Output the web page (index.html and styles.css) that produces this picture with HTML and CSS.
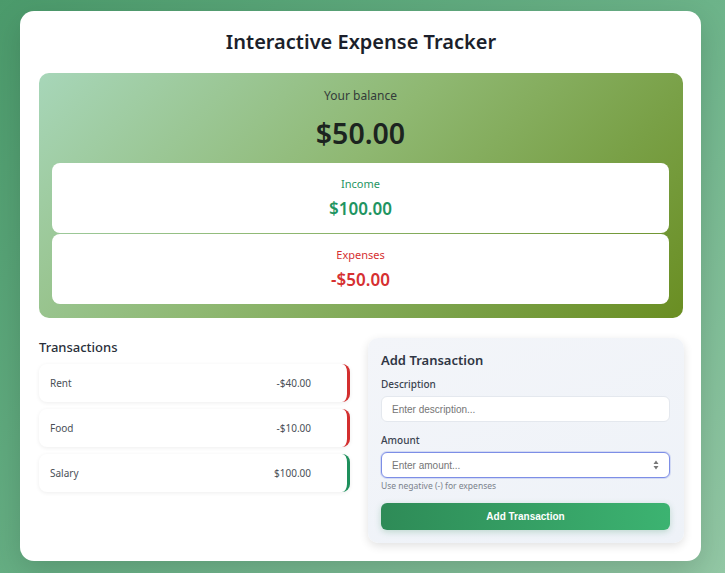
FILE: index.html
```html
<!DOCTYPE html>
<html lang="en">
<head>
<meta charset="utf-8">
<title>Interactive Expense Tracker</title>
<link rel="stylesheet" href="styles.css">
</head>
<body>
<div class="container">
  <h1 class="title">Interactive Expense Tracker</h1>
  <section class="balance-card">
    <div class="balance-label">Your balance</div>
    <div class="balance-value">$50.00</div>
    <div class="summary">
      <div class="summary-label income">Income</div>
      <div class="summary-value income">$100.00</div>
    </div>
    <div class="summary">
      <div class="summary-label expense">Expenses</div>
      <div class="summary-value expense">-$50.00</div>
    </div>
  </section>
  <div class="columns">
    <section class="transactions">
      <h2 class="section-title">Transactions</h2>
      <ul class="list">
        <li class="item minus"><span>Rent</span><span>-$40.00</span></li>
        <li class="item minus"><span>Food</span><span>-$10.00</span></li>
        <li class="item plus"><span>Salary</span><span>$100.00</span></li>
      </ul>
    </section>
    <section class="form-card">
      <h2 class="form-title">Add Transaction</h2>
      <label class="label">Description</label>
      <input class="input" type="text" placeholder="Enter description...">
      <label class="label label-gap">Amount</label>
      <div class="input input-focus">
        <span class="ph">Enter amount...</span>
        <svg class="spin" width="6" height="10" viewBox="0 0 6 10"><path d="M3 0.5L5.5 4H0.5Z M3 9.5L0.5 6H5.5Z" fill="#777"/></svg>
      </div>
      <div class="hint">Use negative (-) for expenses</div>
      <button class="btn">Add Transaction</button>
    </section>
  </div>
</div>
</body>
</html>
```

FILE: styles.css
```css
* { box-sizing: border-box; }
html, body { height: 100%; }
body {
  margin: 0;
  padding: 11px 24px 12px 20px;
  font-family: "Noto Sans", "Open Sans", sans-serif;
  background: linear-gradient(135deg, #4b9a6b 0%, #6cb389 55%, #93c8a5 100%);
  color: #2d3440;
}
.container {
  width: 681px;
  height: 550px;
  background: #fff;
  border-radius: 14px;
  padding: 17px 18px 0 19px;
  box-shadow: 0 10px 30px rgba(0,0,0,0.15);
}
.title {
  margin: 0 0 17px;
  text-align: center;
  font-size: 20px;
  font-weight: 600;
  color: #1b1f2b;
  line-height: 28px;
}
.balance-card {
  background: linear-gradient(135deg, #a7d6b9 0%, #8fb872 45%, #79a046 75%, #6a8e22 100%);
  border-radius: 10px;
  padding: 14px 14px 13px 13px;
  text-align: center;
}
.balance-label {
  font-size: 12px;
  color: #333c3a;
  line-height: 18px;
}
.balance-value {
  font-size: 28.5px;
  font-weight: 600;
  color: #1c2420;
  line-height: 36px;
  margin: 10px 0 12px;
}
.summary {
  background: #fff;
  border-radius: 8px;
  height: 70px;
  padding-top: 13px;
  margin-bottom: 1px;
}
.summary-label { font-size: 11px; line-height: 16px; }
.summary-value { font-size: 17px; font-weight: 600; line-height: 24px; margin-top: 5px; }
.income { color: #1f9562; }
.expense { color: #d63031; }
.columns {
  display: grid;
  grid-template-columns: 311px 316px;
  column-gap: 18px;
  margin-top: 20px;
}
.section-title {
  margin: 0;
  font-size: 13px;
  font-weight: 500;
  color: #2a2f3a;
  line-height: 16px;
  padding-top: 1px;
}
.list { list-style: none; margin: 9px 0 0; padding: 0; display: flex; flex-direction: column; gap: 7px; }
.item {
  height: 38px;
  display: flex;
  justify-content: space-between;
  align-items: center;
  padding: 0 36px 0 11px;
  background: #fff;
  border-radius: 8px;
  font-size: 10px;
  color: #4a4f57;
  box-shadow: 0 1px 4px rgba(0,0,0,0.07);
}
.item.minus { border-right: 3px solid #d32f2f; }
.item.plus { border-right: 3px solid #1e8f5c; }
.form-card {
  background: linear-gradient(160deg, #f3f5f9, #eef2f8);
  border-radius: 10px;
  padding: 14px 14px 14px 13px;
  height: 205px;
  box-shadow: 0 3px 10px rgba(0,0,0,0.12);
}
.form-title {
  margin: 0 0 9px;
  font-size: 13px;
  font-weight: 600;
  color: #2f3644;
  line-height: 16px;
}
.label {
  display: block;
  font-size: 10px;
  font-weight: 500;
  color: #3b4350;
  line-height: 14px;
  margin-bottom: 5px;
}
.label-gap { margin-top: 11px; }
.input {
  display: flex;
  align-items: center;
  width: 100%;
  height: 26px;
  border: 1px solid #e4e8ee;
  border-radius: 6px;
  background: #fff;
  padding: 0 10px;
  font-family: "Liberation Sans", Arial, sans-serif;
  font-size: 10px;
  color: #333;
  outline: none;
}
.input::placeholder { color: #757575; }
.input-focus { border-color: #7d8ee6; box-shadow: 0 0 0 1px rgba(125,142,230,0.25); justify-content: space-between; }
.ph { color: #757575; }
.hint {
  font-size: 8.5px;
  color: #7a818b;
  margin-top: 1px;
  line-height: 13px;
}
.btn {
  display: block;
  width: 100%;
  height: 27px;
  margin-top: 11px;
  border: none;
  border-radius: 6px;
  background: linear-gradient(90deg, #2e8b57, #3cb371);
  color: #fff;
  font-family: "Liberation Sans", Arial, sans-serif;
  font-weight: bold;
  font-size: 10px;
  box-shadow: 0 2px 6px rgba(46,139,87,0.25);
}
```
